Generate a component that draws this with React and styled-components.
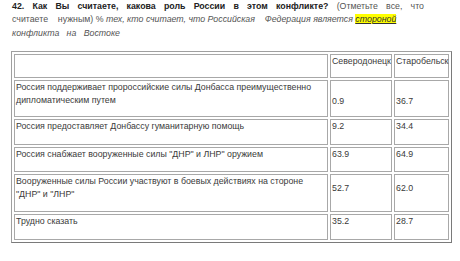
import React from 'react';
import styled, { createGlobalStyle } from 'styled-components';

const Global = createGlobalStyle`
  html, body { margin: 0; padding: 0; background: #ffffff; }
  body { font-family: "Liberation Sans", Arial, sans-serif; }
`;

const Page = styled.div`
  padding: 0 0 0 11px;
  width: 441px;
`;

const Question = styled.div`
  width: 412px;
  padding: 0 0 0 1px;
  font-size: 8.8px;
  line-height: 13.3px;
  color: #555;
`;

const Line = styled.div`
  white-space: ${p => (p.$justify ? 'normal' : 'pre')};
  text-align: ${p => (p.$justify ? 'justify' : 'left')};
  text-align-last: ${p => (p.$justify ? 'justify' : 'auto')};
`;

const Bold = styled.b`
  color: #222;
  font-weight: 700;
`;

const Em = styled.i`
  color: #555;
`;

const Mark = styled.span`
  background: #ffff00;
  color: #333;
  font-style: italic;
  text-decoration: underline;
`;

const Table = styled.table`
  margin-top: 11px;
  width: 441px;
  table-layout: fixed;
  border: 1px solid #a0a0a0;
  border-right-color: #7a7a7a;
  border-bottom-color: #7a7a7a;
  border-spacing: 2px;
  font-size: 8.8px;
  line-height: 13.3px;
  color: #3a3a3a;
`;

const Cell = styled.td`
  box-sizing: border-box;
  height: ${p => p.$h}px;
  border: 1px solid #a8a8a8;
  padding: ${p => p.$offset || 0}px 1px 0 1px;
  vertical-align: top;
  white-space: ${p => (p.$nowrap ? 'nowrap' : 'normal')};
  overflow: visible;
`;

const rows = [
  { h: 37, text: 'Россия поддерживает пророссийские силы Донбасса преимущественно дипломатическим путем', a: '0.9', b: '36.7', off: 14 },
  { h: 26, text: 'Россия предоставляет Донбассу гуманитарную помощь', a: '9.2', b: '34.4', off: 0 },
  { h: 25, text: 'Россия снабжает вооруженные силы "ДНР" и ЛНР" оружием', a: '63.9', b: '64.9', off: 0 },
  { h: 38, text: 'Вооруженные силы России участвуют в боевых действиях на стороне "ДНР" и "ЛНР"', a: '52.7', b: '62.0', off: 7 },
  { h: 26, text: 'Трудно сказать', a: '35.2', b: '28.7', off: 0 },
];

export default function App() {
  return (
    <Page>
      <Global />
      <Question>
        <Line $justify>
          <Bold>42. Как Вы считаете, какова роль России в этом конфликте?</Bold> (Отметьте все, что
        </Line>
        <Line>
          {'считаете    нужным) % '}
          <Em>{'тех, кто считает, что Российская    Федерация является '}</Em>
          <Mark>стороной</Mark>
        </Line>
        <Line>
          <Em>{'конфликта   на   Востоке'}</Em>
        </Line>
      </Question>
      <Table>
        <colgroup>
          <col />
          <col style={{ width: 62 }} />
          <col style={{ width: 55 }} />
        </colgroup>
        <tbody>
          <tr>
            <Cell $h={24} />
            <Cell $h={24} $nowrap>Северодонецк</Cell>
            <Cell $h={24} $nowrap>Старобельск</Cell>
          </tr>
          {rows.map(r => (
            <tr key={r.text}>
              <Cell $h={r.h}>{r.text}</Cell>
              <Cell $h={r.h} $offset={r.off}>{r.a}</Cell>
              <Cell $h={r.h} $offset={r.off}>{r.b}</Cell>
            </tr>
          ))}
        </tbody>
      </Table>
    </Page>
  );
}
